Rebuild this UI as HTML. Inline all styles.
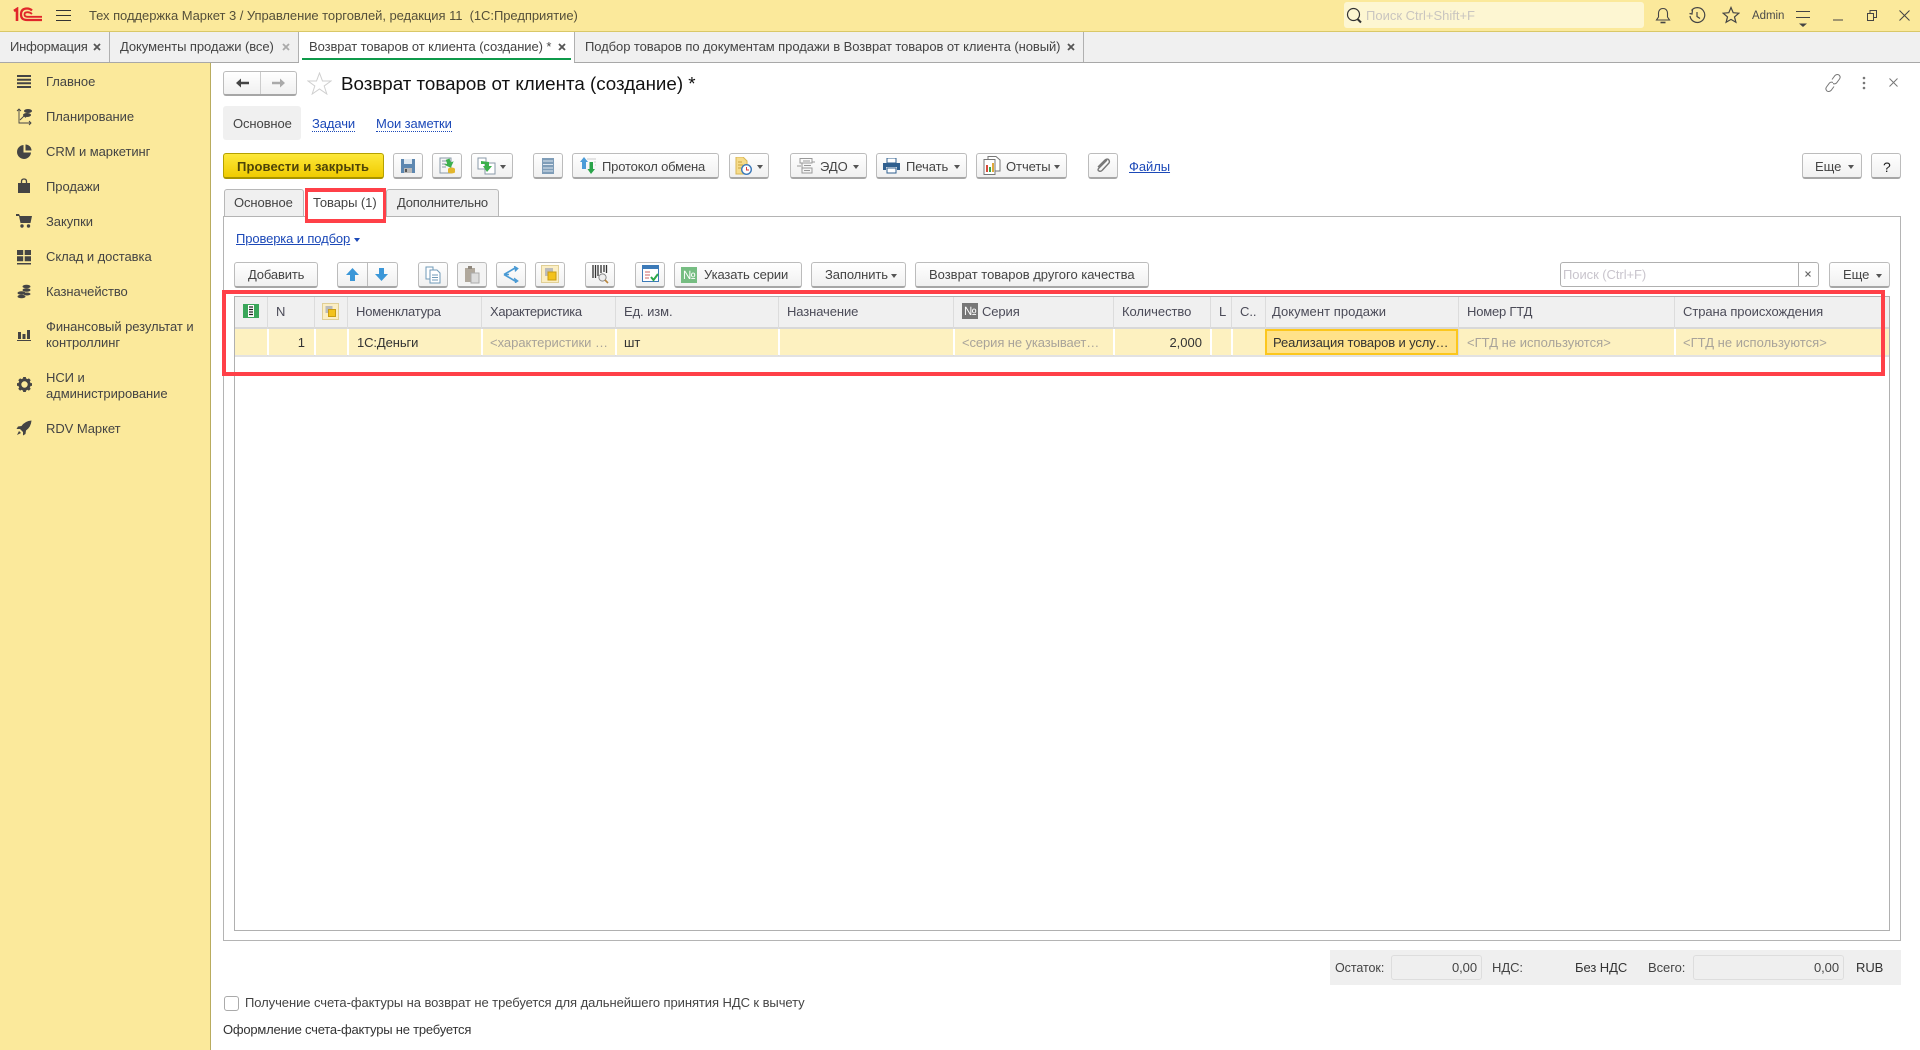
<!DOCTYPE html>
<html lang="ru"><head><meta charset="utf-8"><title>Возврат товаров от клиента</title>
<style>
html,body{margin:0;padding:0;width:1920px;height:1050px;overflow:hidden;background:#fff}
body{font-family:"Liberation Sans","DejaVu Sans",sans-serif;font-size:13px;color:#444;position:relative}
div,span,a,svg{position:absolute}
.t{white-space:nowrap;line-height:16px;height:16px;font-size:13px;color:#444;letter-spacing:-.06px}
.g{color:#a8a39a}.h{color:#4b4b58}.l{color:#1c49b8;text-decoration:underline}.d{color:#333}
.b{box-sizing:border-box;border:1px solid #bcbcbc;border-bottom:2px solid #a6a6a6;border-radius:3px;background:linear-gradient(#fff,#f0f0f0);height:26px}
.v{width:1px;top:297px;height:59px;background:#dcdcdc}
.a{width:0;height:0;border:3px solid transparent;border-top:4px solid #555;border-bottom:0}
.r{background:#ff4048}
</style></head><body>

<!-- header -->
<div style="left:0;top:0;width:1920px;height:31px;background:#fbe99b;border-bottom:1px solid #d9c868;box-sizing:content-box"></div>
<svg style="left:13px;top:7px" width="30" height="16" viewBox="0 0 30 16" fill="none" stroke="#e0262a"><path d="M1 4 L4 2 V14" stroke-width="2.6"/><path d="M19 3.500 Q17 1.500 14 1.500 Q8 1.500 8 7.500 Q8 13 14 13 H29" stroke-width="2.200"/><path d="M19 7 Q17 5.200 14.500 5.200 Q11.500 5.200 11.500 7.500 Q11.500 9.800 14.500 9.800 H29" stroke-width="1.800"/></svg>
<svg style="left:56px;top:9px" width="15" height="13" stroke="#333" stroke-width="1"><path d="M0 1.500H15M0 6.500H15M0 11.500H15"/></svg>
<span class="t" style="left:89px;top:8px;color:#55503a;letter-spacing:-.05px">Тех поддержка Маркет 3 / Управление торговлей, редакция 11&nbsp; (1С:Предприятие)</span>
<div style="left:1344px;top:2px;width:300px;height:26px;background:#fdf6d2;border-radius:3px"></div>
<svg style="left:1346px;top:7px" width="18" height="18" fill="none" stroke="#333"><circle cx="7.500" cy="7.500" r="6" stroke-width="1.200"/><path d="M11.500 12L15 15.500" stroke-width="2"/></svg>
<span class="t" style="left:1366px;top:8px;color:#c9c5c0;letter-spacing:0">Поиск Ctrl+Shift+F</span>
<svg style="left:1654px;top:6px" width="18" height="18" fill="none" stroke="#444" stroke-width="1.100"><path d="M2.500 14H15.500L13.500 11V7Q13 2.500 9 2.500Q5 2.500 4.500 7V11Z"/><path d="M6.500 16.500H11.500" stroke-width="1.600"/></svg>
<svg style="left:1688px;top:7px" width="18" height="18" fill="none" stroke="#444" stroke-width="1.200"><path d="M3.500 3.500A7.400 7.400 0 1 1 2 9"/><path d="M1.500 6.500L4 7L4.500 3" /><path d="M9 5V9.500L12 11.500"/></svg>
<svg style="left:1722px;top:6px" width="18" height="18" fill="none" stroke="#444" stroke-width="1.200"><path d="M9 1.500L11.200 6.700L16.800 7.200L12.500 10.900L13.900 16.300L9 13.400L4.100 16.300L5.500 10.900L1.200 7.200L6.800 6.700Z"/></svg>
<span class="t" style="left:1752px;top:8px;font-size:11.500px;color:#4a4a4a">Admin</span>
<svg style="left:1795px;top:10px" width="16" height="19" stroke="#444"><path d="M1 1.500H15M1 7.500H15"/><path d="M4 13.500H12L8 17Z" fill="#444" stroke="none"/></svg>
<svg style="left:1833px;top:17px" width="10" height="4" stroke="#444"><path d="M0 3H10"/></svg>
<svg style="left:1867px;top:10px" width="10" height="11" fill="none" stroke="#444"><rect x=".5" y="3.500" width="6" height="7"/><path d="M3 3.500V.5H9.500V7.500H6.500"/></svg>
<svg style="left:1899px;top:10px" width="11" height="11" stroke="#444"><path d="M.5 .5L10.500 10.500M10.500 .5L.5 10.500"/></svg>

<!-- window tabs -->
<div style="left:0;top:32px;width:1920px;height:30px;background:#f0f0f0;border-bottom:1px solid #a8a8a8"></div>
<div style="left:299px;top:32px;width:275px;height:31px;background:#fff"></div>
<div style="left:302px;top:58px;width:269px;height:2px;background:#0e9a4a"></div>
<div style="left:109px;top:32px;width:1px;height:30px;background:#b0b0b0"></div>
<div style="left:298px;top:32px;width:1px;height:30px;background:#b0b0b0"></div>
<div style="left:574px;top:32px;width:1px;height:30px;background:#b0b0b0"></div>
<div style="left:1083px;top:32px;width:1px;height:30px;background:#b0b0b0"></div>
<span class="t" style="left:10px;top:39px;letter-spacing:-.2px">Информация</span>
<svg style="left:93px;top:43px" width="8" height="8" stroke="#555" stroke-width="1.800"><path d="M1 1L7 7M7 1L1 7"/></svg>
<span class="t" style="left:120px;top:39px;letter-spacing:-.07px">Документы продажи (все)</span>
<svg style="left:282px;top:43px" width="8" height="8" stroke="#aaa" stroke-width="1.800"><path d="M1 1L7 7M7 1L1 7"/></svg>
<span class="t" style="left:309px;top:39px;letter-spacing:-.09px">Возврат товаров от клиента (создание) *</span>
<svg style="left:558px;top:43px" width="8" height="8" stroke="#555" stroke-width="1.800"><path d="M1 1L7 7M7 1L1 7"/></svg>
<span class="t" style="left:585px;top:39px;letter-spacing:-.07px">Подбор товаров по документам продажи в Возврат товаров от клиента (новый)</span>
<svg style="left:1067px;top:43px" width="8" height="8" stroke="#555" stroke-width="1.800"><path d="M1 1L7 7M7 1L1 7"/></svg>

<!-- sidebar -->
<div style="left:0;top:63px;width:210px;height:987px;background:#fbe99b;border-right:1px solid #b9ac5e"></div>
<svg style="left:16px;top:74px" width="16" height="16" stroke="#444" stroke-width="2"><path d="M1 2H15M1 5.700H15M1 9.300H15M1 13H15"/></svg>
<svg style="left:16px;top:108px" width="16" height="18" fill="none" stroke="#444"><path d="M3 1V15H15M1 3L3 1L5 3M13 13L15 15L13 17" stroke-width=".9"/><path d="M4 12L8 8L10 9.500" stroke-width=".9"/><ellipse cx="12" cy="3" rx="3.500" ry="1.500" fill="#444"/><ellipse cx="11" cy="7" rx="3.500" ry="1.500" fill="#444"/></svg>
<svg style="left:17px;top:144px" width="15" height="15"><path d="M6.500 1A7 7 0 1 0 14 8.500H6.500Z" fill="#444"/><path d="M8.500 .5A6 6 0 0 1 14.500 6.500H8.500Z" fill="#444"/></svg>
<svg style="left:17px;top:178px" width="15" height="16"><path d="M1 5H13V15H1Z" fill="#444"/><path d="M4.500 6V3.500Q4.500 1 7 1Q9.500 1 9.500 3.500V6" fill="none" stroke="#444" stroke-width="1.300"/></svg>
<svg style="left:16px;top:213px" width="16" height="15" fill="#444"><path d="M0 1H3L4 3H16L14.500 10H4.500L3 3H0Z"/><circle cx="6" cy="13" r="1.700"/><circle cx="12.500" cy="13" r="1.700"/></svg>
<svg style="left:16px;top:249px" width="16" height="16" fill="#444"><path d="M1 1H7.200V6H1ZM8.700 1H15V6H8.700ZM1 7.300H7.200V12.300H1ZM8.700 7.300H15V12.300H8.700ZM1 14H15V15.500H1Z"/></svg>
<svg style="left:17px;top:284px" width="14" height="16" fill="#444"><ellipse cx="9.500" cy="2.500" rx="4" ry="1.800"/><ellipse cx="9.500" cy="6" rx="4" ry="1.800"/><ellipse cx="4.500" cy="9" rx="4" ry="1.800"/><ellipse cx="4.500" cy="12.500" rx="4" ry="1.800"/><ellipse cx="10" cy="10" rx="3.500" ry="1.500"/></svg>
<svg style="left:17px;top:327px" width="14" height="14" fill="#444"><path d="M1 5H4V12H1ZM5.500 7H8.500V12H5.500ZM10 3H13V12H10ZM0 13H14V14H0Z"/></svg>
<svg style="left:17px;top:377px" width="15" height="15"><circle cx="7.500" cy="7.500" r="4.700" fill="none" stroke="#444" stroke-width="3"/><path d="M7.500 0V3M7.500 12V15M0 7.500H3M12 7.500H15M2.200 2.200L4.300 4.300M10.700 10.700L12.800 12.800M12.800 2.200L10.700 4.300M4.300 10.700L2.200 12.800" stroke="#444" stroke-width="2.800"/></svg>
<svg style="left:16px;top:420px" width="16" height="16" fill="#444"><path d="M15.500 .5Q9 1 5.500 6L2 6.500L.5 9L4 9L7 12L7 15.500L9.500 14L10 10.500Q15 7 15.500 .5Z"/><path d="M3 11L5 13L1 15Z"/></svg>
<span class="t" style="left:46px;top:74px">Главное</span>
<span class="t" style="left:46px;top:109px">Планирование</span>
<span class="t" style="left:46px;top:144px">CRM и маркетинг</span>
<span class="t" style="left:46px;top:179px">Продажи</span>
<span class="t" style="left:46px;top:214px">Закупки</span>
<span class="t" style="left:46px;top:249px">Склад и доставка</span>
<span class="t" style="left:46px;top:284px">Казначейство</span>
<span class="t" style="left:46px;top:319px">Финансовый результат и</span>
<span class="t" style="left:46px;top:335px">контроллинг</span>
<span class="t" style="left:46px;top:370px">НСИ и</span>
<span class="t" style="left:46px;top:386px">администрирование</span>
<span class="t" style="left:46px;top:421px">RDV Маркет</span>

<!-- title row -->
<div class="b" style="left:223px;top:71px;width:74px;height:25px"></div>
<div style="left:260px;top:72px;width:1px;height:22px;background:#ccc"></div>
<svg style="left:236px;top:78px" width="13" height="10" fill="#444"><path d="M0 5L5 .5V3.700H13V6.300H5V9.500Z"/></svg>
<svg style="left:272px;top:78px" width="13" height="10" fill="#aaa"><path d="M13 5L8 .5V3.700H0V6.300H8V9.500Z"/></svg>
<svg style="left:307px;top:72px" width="25" height="23" fill="none" stroke="#cfcfcf"><path d="M12.500 1L15.500 9H24L17.200 14L19.800 22L12.500 17L5.200 22L7.800 14L1 9H9.500Z"/></svg>
<span class="t" style="left:341px;top:72px;font-size:18.750px;height:24px;line-height:24px;color:#111;letter-spacing:0">Возврат товаров от клиента (создание) *</span>
<svg style="left:1824px;top:73px" width="18" height="20" fill="none" stroke="#777"><path d="M8 6.500L11 2.500Q13 .7 15 2Q17 4 15.500 6L12.500 10Q11 11.500 9 10.500M10 13.500L7 17.500Q5 19.300 3 18Q1 16 2.500 14L5.500 10Q7 8.500 9 9.500"/></svg>
<svg style="left:1862px;top:76px" width="4" height="14" fill="#777"><circle cx="2" cy="2" r="1.300"/><circle cx="2" cy="7" r="1.300"/><circle cx="2" cy="12" r="1.300"/></svg>
<svg style="left:1889px;top:78px" width="9" height="9" stroke="#777"><path d="M.5 .5L8.500 8.500M8.500 .5L.5 8.500"/></svg>

<div style="left:223px;top:106px;width:78px;height:34px;background:#f0f0f0;border-radius:3px"></div>
<span class="t" style="left:233px;top:116px;letter-spacing:-.1px">Основное</span>
<span class="t" style="left:312px;top:116px;color:#1c49b8;border-bottom:1px dotted #1c49b8;height:15px;letter-spacing:-.1px">Задачи</span>
<span class="t" style="left:376px;top:116px;color:#1c49b8;border-bottom:1px dotted #1c49b8;height:15px;letter-spacing:-.1px">Мои заметки</span>

<!-- main toolbar -->
<div style="left:223px;top:153px;width:161px;height:26px;box-sizing:border-box;border:1px solid #b5a100;border-bottom:2px solid #a89400;border-radius:3px;background:linear-gradient(#fde83a,#f0cb00)"></div>
<span class="t" style="left:237px;top:159px;font-weight:bold;color:#4e4408;letter-spacing:.1px">Провести и закрыть</span>
<div class="b" style="left:393px;top:153px;width:30px"></div>
<svg style="left:400px;top:158px" width="16" height="16"><path d="M1 1H15V15H1Z" fill="#5d87b0"/><path d="M4 1H12V6H4Z" fill="#dfe8f0"/><path d="M4 10H12V15H4Z" fill="#b9b9b9"/><path d="M5 11H7V14H5Z" fill="#555"/></svg>
<div class="b" style="left:432px;top:153px;width:30px"></div>
<svg style="left:439px;top:157px" width="18" height="18"><path d="M1 1H12V16H1Z" fill="#f6f6f6" stroke="#8a9aa8"/><path d="M3 4H8M3 7H7M3 10H7" stroke="#8a9aa8"/><path d="M8 2H12V6H15L10 11L5 6H8Z" fill="#3cb04c" transform="rotate(-20 10 6)"/><ellipse cx="12.500" cy="12" rx="3.500" ry="1.500" fill="#e3b62c"/><path d="M9 12V15.500Q12.500 17.500 16 15.500V12Z" fill="#e3b62c"/></svg>
<div class="b" style="left:471px;top:153px;width:42px"></div>
<svg style="left:477px;top:157px" width="20" height="18"><path d="M1 1H9V12H1Z" fill="#fff" stroke="#8a9aa8"/><path d="M8 6H18V17H8Z" fill="#fff" stroke="#8a9aa8"/><path d="M4 4L12 5V9L15 9L10 15L6 9H8L8 7L4 7Z" fill="#3cb04c"/></svg>
<div class="a" style="left:500px;top:165px"></div>
<div class="b" style="left:533px;top:153px;width:30px"></div>
<svg style="left:542px;top:158px" width="12" height="16"><path d="M0 0H12V16H0Z" fill="#7f9db8"/><path d="M1 3H11M1 6.500H11M1 10H11M1 13H11" stroke="#dde6ef"/></svg>
<div class="b" style="left:572px;top:153px;width:147px"></div>
<svg style="left:580px;top:157px" width="16" height="18"><path d="M4 0L8 5H6V12H2V5H0Z" fill="#4b9cd8"/><path d="M11 17L7.500 12H9.500V5H13V12H15Z" fill="#2aa44a"/><path d="M7 2H16M14 5H16M15 8H16" stroke="#ccc"/></svg>
<span class="t" style="left:602px;top:159px;letter-spacing:-.16px">Протокол обмена</span>
<div class="b" style="left:729px;top:153px;width:40px"></div>
<svg style="left:735px;top:157px" width="20" height="18"><path d="M1 0H8L12 4V17H1Z" fill="#f6dc8b" stroke="#d9b654"/><path d="M3 5H7M3 8H8M3 11H6" stroke="#c9a23c"/><circle cx="11.500" cy="12.500" r="4.800" fill="#fff" stroke="#3b78b8" stroke-width="1.400"/><path d="M11.500 10V13H14" stroke="#d83a3a" fill="none"/></svg>
<div class="a" style="left:757px;top:165px"></div>
<div class="b" style="left:790px;top:153px;width:77px"></div>
<svg style="left:797px;top:158px" width="18" height="16" fill="none" stroke="#999"><path d="M3 .5H15V5H3ZM5 5V10H15V15H5V10"/><path d="M6 3H13M7 7.500H14M7 12.500H13M0 8H4M18 4H15"/></svg>
<span class="t" style="left:820px;top:159px">ЭДО</span>
<div class="a" style="left:853px;top:165px"></div>
<div class="b" style="left:876px;top:153px;width:91px"></div>
<svg style="left:883px;top:158px" width="17" height="16"><path d="M4 0H13V5H4Z" fill="#fff" stroke="#2f5f8f"/><path d="M0 5H17V12H14V9H3V12H0Z" fill="#2f5f8f"/><path d="M4 10H13V15H4Z" fill="#fff" stroke="#2f5f8f"/></svg>
<span class="t" style="left:906px;top:159px">Печать</span>
<div class="a" style="left:954px;top:165px"></div>
<div class="b" style="left:976px;top:153px;width:91px"></div>
<svg style="left:983px;top:156px" width="18" height="20"><path d="M5 .5H13L17 4V15H5Z" fill="#fff" stroke="#777"/><path d="M1 3.500H12V18.500H1Z" fill="#fff" stroke="#777"/><path d="M3 9H5V16H3Z" fill="#d84a3a"/><path d="M6 11H8V16H6Z" fill="#3aa84a"/><path d="M9 7H11V16H9Z" fill="#e0a83a"/></svg>
<span class="t" style="left:1006px;top:159px">Отчеты</span>
<div class="a" style="left:1054px;top:165px"></div>
<div class="b" style="left:1088px;top:153px;width:30px"></div>
<svg style="left:1095px;top:158px" width="16" height="16" fill="none" stroke="#777" stroke-width="1.400"><path d="M12 2L4 10Q2 12 4 13Q6 14 7.500 12L14 5Q15 3 13.500 1.500Q12 .5 10 2L3 9"/></svg>
<span class="t l" style="left:1129px;top:159px">Файлы</span>
<div class="b" style="left:1802px;top:153px;width:60px"></div>
<span class="t" style="left:1815px;top:159px">Еще</span>
<div class="a" style="left:1848px;top:165px"></div>
<div class="b" style="left:1871px;top:153px;width:30px"></div>
<span class="t" style="left:1883px;top:159px;color:#222;font-size:14px">?</span>

<!-- form tabs & panel -->
<div style="left:223px;top:216px;width:1678px;height:725px;box-sizing:border-box;border:1px solid #b4b4b4"></div>
<div style="left:224px;top:189px;width:80px;height:27px;box-sizing:border-box;background:#f0f0f0;border:1px solid #b8b8b8;border-bottom:0;border-radius:3px 3px 0 0"></div>
<div style="left:307px;top:189px;width:78px;height:29px;background:#fff"></div>
<div style="left:386px;top:189px;width:113px;height:27px;box-sizing:border-box;background:#f0f0f0;border:1px solid #b8b8b8;border-bottom:0;border-radius:3px 3px 0 0"></div>
<span class="t" style="left:234px;top:195px;letter-spacing:-.1px">Основное</span>
<span class="t" style="left:313px;top:195px">Товары (1)</span>
<span class="t" style="left:397px;top:195px;letter-spacing:-.2px">Дополнительно</span>
<div class="r" style="left:305px;top:188px;width:81px;height:4px"></div>
<div class="r" style="left:305px;top:219px;width:81px;height:4px"></div>
<div class="r" style="left:305px;top:188px;width:3px;height:35px"></div>
<div class="r" style="left:383px;top:188px;width:3px;height:35px"></div>

<span class="t l" style="left:236px;top:231px;letter-spacing:-.12px">Проверка и подбор</span>
<div class="a" style="left:354px;top:238px;border-top-color:#1c49b8"></div>

<!-- table toolbar -->
<div class="b" style="left:234px;top:262px;width:84px"></div>
<span class="t" style="left:248px;top:267px;letter-spacing:-.15px">Добавить</span>
<div class="b" style="left:337px;top:262px;width:61px"></div>
<div style="left:367px;top:263px;width:1px;height:23px;background:#bcbcbc"></div>
<svg style="left:345px;top:267px" width="15" height="15" fill="#3b97d8"><path d="M7.500 1L14 8H10V14H5V8H1Z"/></svg>
<svg style="left:374px;top:267px" width="15" height="15" fill="#3b97d8"><path d="M7.500 14L14 7H10V1H5V7H1Z"/></svg>
<div class="b" style="left:418px;top:262px;width:30px"></div>
<svg style="left:425px;top:266px" width="16" height="18" fill="#fff" stroke="#6f9ab8"><path d="M1 1H8V13H1Z"/><path d="M5 4H12L15 7V17H5Z"/><path d="M7 9H13M7 11.500H13M7 14H13"/></svg>
<div class="b" style="left:457px;top:262px;width:30px;background:#f4f4f4"></div>
<svg style="left:464px;top:266px" width="16" height="18"><path d="M1 2H11V16H1Z" fill="#b0a89c"/><path d="M4 0H8V3H4Z" fill="#8f887e"/><path d="M7 7H15V17H7Z" fill="#ddd" stroke="#aaa"/></svg>
<div class="b" style="left:496px;top:262px;width:30px"></div>
<svg style="left:503px;top:266px" width="16" height="17" fill="none" stroke="#4a9ad4" stroke-width="1.600"><path d="M1 8.500L12 2M1 8.500L12 15M1 8.500H6"/><path d="M11 0L15 2.500L12 5.500M11 12L15 15L12 17" fill="#4a9ad4" stroke-width="1"/></svg>
<div class="b" style="left:535px;top:262px;width:30px"></div>
<svg style="left:541px;top:265px" width="18" height="18"><rect x=".5" y=".5" width="17" height="17" fill="#fbeec4" stroke="#e0cf96"/><rect x="4" y="3" width="8" height="8" fill="#bbb"/><rect x="7" y="7" width="8" height="8" fill="#f3c21c" stroke="#c99c10"/></svg>
<div class="b" style="left:585px;top:262px;width:30px"></div>
<svg style="left:592px;top:265px" width="17" height="19"><path d="M1 0V13M3.500 0V13M6 0V11M9 0V8M12 0V7M14.500 0V8" stroke="#333" stroke-width="1.300"/><circle cx="10.500" cy="12.500" r="3.600" fill="#eee" stroke="#888"/><path d="M13 15L16 18" stroke="#b8863c" stroke-width="1.600"/></svg>
<div class="b" style="left:635px;top:262px;width:30px"></div>
<svg style="left:642px;top:265px" width="17" height="18"><path d="M.5 .5H16.500V16.500H.5Z" fill="#fff" stroke="#3c7ab8"/><path d="M1 1H16V4H1Z" fill="#3c7ab8"/><path d="M3 7H8M3 10H8M3 13H7" stroke="#c66"/><path d="M9 12L11.500 15L16 9" fill="none" stroke="#2aa84a" stroke-width="2"/></svg>
<div class="b" style="left:674px;top:262px;width:128px"></div>
<div style="left:681px;top:267px;width:16px;height:16px;background:#76bd82"></div>
<span class="t" style="left:681px;top:267px;width:16px;text-align:center;color:#fff;font-size:12px;letter-spacing:-.5px">№</span>
<span class="t" style="left:704px;top:267px;letter-spacing:-.1px">Указать серии</span>
<div class="b" style="left:811px;top:262px;width:95px"></div>
<span class="t" style="left:825px;top:267px;letter-spacing:-.1px">Заполнить</span>
<div class="a" style="left:891px;top:274px"></div>
<div class="b" style="left:915px;top:262px;width:234px"></div>
<span class="t" style="left:929px;top:267px;letter-spacing:-.01px">Возврат товаров другого качества</span>
<div style="left:1560px;top:262px;width:259px;height:25px;box-sizing:border-box;background:#fff;border:1px solid #b0b0b0;border-radius:3px"></div>
<div style="left:1798px;top:263px;width:1px;height:23px;background:#b0b0b0"></div>
<span class="t" style="left:1563px;top:267px;color:#c9c5cd">Поиск (Ctrl+F)</span>
<svg style="left:1805px;top:271px" width="6" height="6" stroke="#666" stroke-width="1.200"><path d="M.5 .5L5.500 5.500M5.500 .5L.5 5.500"/></svg>
<div class="b" style="left:1829px;top:262px;width:61px"></div>
<span class="t" style="left:1843px;top:267px">Еще</span>
<div class="a" style="left:1876px;top:274px"></div>

<!-- grid -->
<div style="left:234px;top:296px;width:1656px;height:635px;box-sizing:border-box;border:1px solid #b0b0b0"></div>
<div style="left:235px;top:297px;width:1654px;height:30px;background:#f0f0f0"></div>
<div style="left:235px;top:327px;width:1654px;height:2px;background:#d8d8d8"></div>
<div style="left:235px;top:329px;width:1654px;height:26px;background:#fdf1c0"></div>
<div style="left:235px;top:355px;width:1654px;height:2px;background:#e2e2e2"></div>
<div class="v" style="left:267px"></div><div class="v" style="left:314px"></div><div class="v" style="left:347px"></div><div class="v" style="left:481px"></div><div class="v" style="left:615px"></div><div class="v" style="left:778px"></div><div class="v" style="left:953px"></div><div class="v" style="left:1113px"></div><div class="v" style="left:1210px"></div><div class="v" style="left:1231px"></div><div class="v" style="left:1265px"></div><div class="v" style="left:1458px"></div><div class="v" style="left:1674px"></div>
<div style="left:267px;top:329px;width:2px;height:26px;background:#fff"></div>
<div style="left:314px;top:329px;width:2px;height:26px;background:#fff"></div>
<div style="left:347px;top:329px;width:2px;height:26px;background:#fff"></div>
<div style="left:481px;top:329px;width:2px;height:26px;background:#fff"></div>
<div style="left:615px;top:329px;width:2px;height:26px;background:#fff"></div>
<div style="left:778px;top:329px;width:2px;height:26px;background:#fff"></div>
<div style="left:953px;top:329px;width:2px;height:26px;background:#fff"></div>
<div style="left:1113px;top:329px;width:2px;height:26px;background:#fff"></div>
<div style="left:1210px;top:329px;width:2px;height:26px;background:#fff"></div>
<div style="left:1231px;top:329px;width:2px;height:26px;background:#fff"></div>
<div style="left:1674px;top:329px;width:2px;height:26px;background:#fff"></div>
<div style="left:1265px;top:329px;width:193px;height:26px;box-sizing:border-box;background:#ffe289;border:2px solid #fcc71d"></div>

<svg style="left:243px;top:304px" width="16" height="14"><rect width="16" height="14" fill="#3aa65a"/><rect x="5" y="1" width="6" height="12" fill="#fff"/><path d="M6 3H10M6 5.500H10M6 8H10M6 10.500H10" stroke="#222" stroke-width="1.200"/></svg>
<span class="t h" style="left:276px;top:304px">N</span>
<svg style="left:322px;top:303px" width="17" height="17"><rect x=".5" y=".5" width="16" height="16" fill="#fbeec4" stroke="#e0cf96"/><rect x="3.500" y="3" width="7" height="7" fill="#bbb"/><rect x="6.500" y="6.500" width="7" height="7" fill="#f3c21c" stroke="#c99c10"/></svg>
<span class="t h" style="left:356px;top:304px;letter-spacing:-.2px">Номенклатура</span>
<span class="t h" style="left:490px;top:304px;letter-spacing:-.35px">Характеристика</span>
<span class="t h" style="left:624px;top:304px;letter-spacing:-.1px">Ед. изм.</span>
<span class="t h" style="left:787px;top:304px;letter-spacing:-.1px">Назначение</span>
<div style="left:962px;top:303px;width:16px;height:16px;background:#777"></div>
<span class="t" style="left:962px;top:303px;width:16px;text-align:center;color:#fff;font-size:12px;letter-spacing:-.5px">№</span>
<span class="t h" style="left:982px;top:304px;letter-spacing:-.1px">Серия</span>
<span class="t h" style="left:1122px;top:304px;letter-spacing:-.05px">Количество</span>
<span class="t h" style="left:1219px;top:304px">L</span>
<span class="t h" style="left:1240px;top:304px">С..</span>
<span class="t h" style="left:1272px;top:304px;letter-spacing:.05px">Документ продажи</span>
<span class="t h" style="left:1467px;top:304px;letter-spacing:-.2px">Номер ГТД</span>
<span class="t h" style="left:1683px;top:304px;letter-spacing:-.07px">Страна происхождения</span>

<span class="t d" style="left:295px;top:335px;width:10px;text-align:right;letter-spacing:0">1</span>
<span class="t d" style="left:357px;top:335px;letter-spacing:-.1px">1С:Деньги</span>
<span class="t g" style="left:490px;top:335px;letter-spacing:-.02px">&lt;характеристики …</span>
<span class="t d" style="left:624px;top:335px">шт</span>
<span class="t g" style="left:962px;top:335px;letter-spacing:-.1px">&lt;серия не указывает…</span>
<span class="t d" style="left:1162px;top:335px;width:40px;text-align:right;letter-spacing:0">2,000</span>
<span class="t d" style="left:1273px;top:335px;letter-spacing:-.13px">Реализация товаров и услу…</span>
<span class="t g" style="left:1467px;top:335px;letter-spacing:.02px">&lt;ГТД не используются&gt;</span>
<span class="t g" style="left:1683px;top:335px;letter-spacing:.02px">&lt;ГТД не используются&gt;</span>

<div class="r" style="left:222px;top:290px;width:1663px;height:4px"></div>
<div class="r" style="left:222px;top:372px;width:1663px;height:4px"></div>
<div class="r" style="left:222px;top:290px;width:4px;height:86px"></div>
<div class="r" style="left:1881px;top:290px;width:4px;height:86px"></div>

<!-- totals -->
<div style="left:1330px;top:950px;width:571px;height:35px;background:#efefef"></div>
<span class="t" style="left:1335px;top:960px;font-size:12.500px">Остаток:</span>
<div style="left:1391px;top:955px;width:91px;height:25px;box-sizing:border-box;border:1px solid #ddd;border-radius:3px"></div>
<span class="t" style="left:1420px;top:960px;width:57px;text-align:right">0,00</span>
<span class="t" style="left:1492px;top:960px">НДС:</span>
<span class="t" style="left:1575px;top:960px;color:#333">Без НДС</span>
<span class="t" style="left:1648px;top:960px;font-size:13px">Всего:</span>
<div style="left:1693px;top:955px;width:151px;height:25px;box-sizing:border-box;border:1px solid #ddd;border-radius:3px"></div>
<span class="t" style="left:1780px;top:960px;width:59px;text-align:right">0,00</span>
<span class="t" style="left:1856px;top:960px;color:#333">RUB</span>

<div style="left:224px;top:996px;width:15px;height:15px;box-sizing:border-box;border:1px solid #aaa;border-radius:3px;background:#fff"></div>
<span class="t" style="left:245px;top:995px;letter-spacing:-.07px">Получение счета-фактуры на возврат не требуется для дальнейшего принятия НДС к вычету</span>
<span class="t" style="left:223px;top:1022px;color:#333;letter-spacing:-.21px">Оформление счета-фактуры не требуется</span>
</body></html>
